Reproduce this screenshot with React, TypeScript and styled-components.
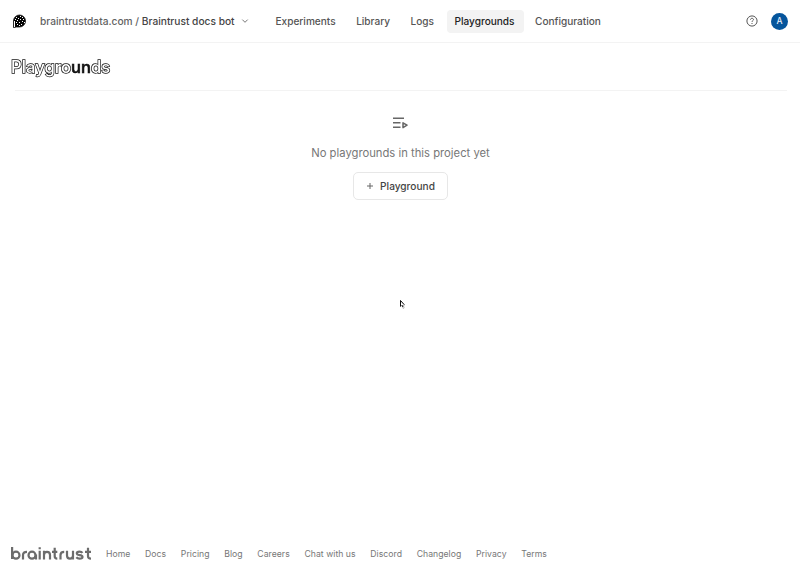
import React from "react";
import styled, { createGlobalStyle } from "styled-components";

const GlobalStyle = createGlobalStyle`
  * { box-sizing: border-box; }
  body { margin: 0; background: #fff; font-family: Inter, "Liberation Sans", sans-serif; color: #555; }
`;

const Page = styled.div`
  height: 573px;
  display: flex;
  flex-direction: column;
  position: relative;
  overflow: hidden;
`;

const Header = styled.header`
  height: 43px;
  flex: none;
  display: flex;
  align-items: center;
  padding: 0 12px;
  border-bottom: 1px solid #f3f3f3;
`;

const LogoMark = styled.svg`
  width: 15px;
  height: 15px;
  margin-right: 13px;
  flex: none;
`;

const Breadcrumb = styled.div`
  display: flex;
  align-items: center;
  width: 227.5px;
  font-size: 10.2px;
  line-height: 16px;
  font-weight: 500;
  color: #626262;
  white-space: pre;
`;

const Project = styled.span`
  color: #444;
`;

const Chevron = styled.svg`
  width: 8px;
  height: 8px;
  margin-left: 6px;
`;

const Nav = styled.nav`
  display: flex;
  align-items: center;
  gap: 3.5px;
  flex: 1;
`;

const NavItem = styled.a<{ $active?: boolean }>`
  height: 23px;
  padding: 0 9px 0 8px;
  line-height: 23px;
  border-radius: 4px;
  font-size: 10.08px;
  font-weight: 500;
  color: ${(p) => (p.$active ? "#222" : "#555")};
  background: ${(p) => (p.$active ? "#f3f3f3" : "transparent")};
`;

const HelpIcon = styled.svg`
  width: 12px;
  height: 12px;
  margin-right: 13px;
`;

const Avatar = styled.div`
  width: 17px;
  height: 17px;
  border-radius: 50%;
  background: #05559c;
  color: #e4effa;
  font-size: 8.5px;
  font-weight: 500;
  line-height: 17px;
  text-align: center;
`;

const Content = styled.main`
  flex: 1;
  display: flex;
  flex-direction: column;
  padding: 0 13px 0 11px;
`;

const TitleBar = styled.div`
  height: 48px;
  display: flex;
  align-items: center;
  border-bottom: 1px solid #f3f3f3;
  margin-left: 4px;
`;

const Title = styled.h1`
  margin: 0 0 0 -4px;
  font-size: 16.6px;
  line-height: 22px;
  font-weight: 500;
  letter-spacing: 0.05px;
  color: #fff;
  -webkit-text-stroke: 1.4px #111;
  paint-order: stroke fill;
  will-change: transform;
`;

const TitleSolid = styled.span`
  color: #111;
  -webkit-text-stroke-width: 0.6px;
`;

const Empty = styled.section`
  display: flex;
  flex-direction: column;
  align-items: center;
  padding: 24px 0 0 3px;
`;

const ListIcon = styled.svg`
  width: 16px;
  height: 16px;
  margin-right: 2px;
`;

const Message = styled.p`
  margin: 14px 0 11px;
  font-size: 11.25px;
  line-height: 16px;
  color: #777;
`;

const CreateButton = styled.button`
  width: 95px;
  height: 28px;
  display: flex;
  align-items: center;
  justify-content: center;
  gap: 6px;
  padding: 0;
  background: #fff;
  border: 1px solid #e7e7e7;
  border-radius: 5px;
  font-family: inherit;
  font-size: 10.15px;
  font-weight: 500;
  color: #444;
`;

const PlusIcon = styled.svg`
  width: 8px;
  height: 8px;
`;

const Footer = styled.footer`
  height: 39px;
  flex: none;
  display: flex;
  align-items: center;
  padding-left: 11px;
`;

const Wordmark = styled.svg`
  width: 81px;
  height: 15px;
  margin-right: 14px;
  fill: none;
  stroke: #6c6c6c;
  stroke-width: 2.2;
`;

const FooterLinks = styled.div`
  display: flex;
  gap: 14.7px;
`;

const FooterLink = styled.a`
  font-size: 8.67px;
  line-height: 14px;
  letter-spacing: 0.03px;
  color: #777;
`;

const Cursor = styled.svg`
  position: absolute;
  left: 399px;
  top: 299px;
  width: 7px;
  height: 11px;
`;

const navItems = ["Experiments", "Library", "Logs", "Playgrounds", "Configuration"];
const footerItems = ["Home", "Docs", "Pricing", "Blog", "Careers", "Chat with us", "Discord", "Changelog", "Privacy", "Terms"];

export default function App() {
  return (
    <Page>
      <GlobalStyle />
      <Header>
        <LogoMark viewBox="0 0 15 15">
          <path d="M1.500 13.500V7a6 6 0 1 1 6 6H4.500z" fill="#050505" stroke="#111" strokeWidth="0.8" />
          <path d="M2.500 13V7M4 3.500h1M6 4.500h1M8 2.500h1M10 3.500h1M11 5.500h1M8 5.500h1M5 6.500h1M10 7.500h1M7 8.500h1M12 8.500h1M9 10.500h1M5 10.500h1M4 8.500h1M7 11.500h1M3 5.500h1" stroke="#fff" strokeWidth="1" />
        </LogoMark>
        <Breadcrumb>
          braintrustdata.com / <Project>Braintrust docs bot</Project>
          <Chevron viewBox="0 0 8 8" fill="none" stroke="#777" strokeWidth="1">
            <path d="m1.300 2.600 2.700 2.700 2.700-2.700" />
          </Chevron>
        </Breadcrumb>
        <Nav>
          {navItems.map((item) => (
            <NavItem key={item} $active={item === "Playgrounds"}>{item}</NavItem>
          ))}
        </Nav>
        <HelpIcon viewBox="0 0 12 12" fill="none" stroke="#555" strokeWidth="1">
          <circle cx="6" cy="6" r="5.1" />
          <path d="M4.500 4.700c0-.9.7-1.400 1.500-1.400s1.500.5 1.500 1.300C7.500 5.600 6 5.700 6 6.900M6 8v1" />
        </HelpIcon>
        <Avatar>A</Avatar>
      </Header>
      <Content>
        <TitleBar>
          <Title>Playgro<TitleSolid>un</TitleSolid>ds</Title>
        </TitleBar>
        <Empty>
          <ListIcon viewBox="0 0 16 16" fill="none" stroke="#666" strokeWidth="1.4">
            <path d="M1 3.200h11M1 7.700h7.500M1 12.200h7.500" />
            <path d="m11 7.800 4 2.400-4 2.400z" strokeWidth="1.500" strokeLinejoin="round" />
          </ListIcon>
          <Message>No playgrounds in this project yet</Message>
          <CreateButton>
            <PlusIcon viewBox="0 0 8 8" stroke="#666" strokeWidth="1">
              <path d="M1 4h6M4 1v6" />
            </PlusIcon>
            Playground
          </CreateButton>
        </Empty>
      </Content>
      <Footer>
        <Wordmark viewBox="0 0 81 15" role="img" aria-label="braintrust">
          <path d="M1.100 1v12" />
          <circle cx="5" cy="9.200" r="3.500" />
          <path d="M12 13.600V9q0-3.200 4-3.200" />
          <circle cx="21" cy="9.200" r="3.500" />
          <path d="M25 8.500v5.100M28.700 4.700v8.900M28.700 1.200v2M33 13.600V4.700M33 9q0-3.200 3-3.200t3 3.200v4.600M43.700 1.800v8.500q0 2.300 2.600 2.300M41 5.800h5.300M49.500 13.600V9q0-3.200 3.700-3.200M56 4.700v4.800q0 3.100 3 3.100t3-3.100V4.700M62 9v4.600M71.500 6.900q-1-1.300-3-1.300-2.700 0-2.700 1.700 0 1.500 2.700 1.800 3 .3 3 1.900 0 1.700-3 1.700-2 0-3.200-1.400M77 1.800v8.500q0 2.300 3 2.300M74 5.800h6" />
        </Wordmark>
        <FooterLinks>
          {footerItems.map((item) => <FooterLink key={item}>{item}</FooterLink>)}
        </FooterLinks>
      </Footer>
      <Cursor viewBox="0 0 7 11">
        <path d="M1.500 1.500v6.300l1.500-1.500L4.200 9.500l1-.5L4.200 6H6z" fill="#fff" stroke="#999" strokeWidth="0.600" />
        <path d="M1.500 1.500v6M1.500 1.500l3.500 4M2.800 6l1.200 2" stroke="#111" fill="none" />
      </Cursor>
    </Page>
  );
}
